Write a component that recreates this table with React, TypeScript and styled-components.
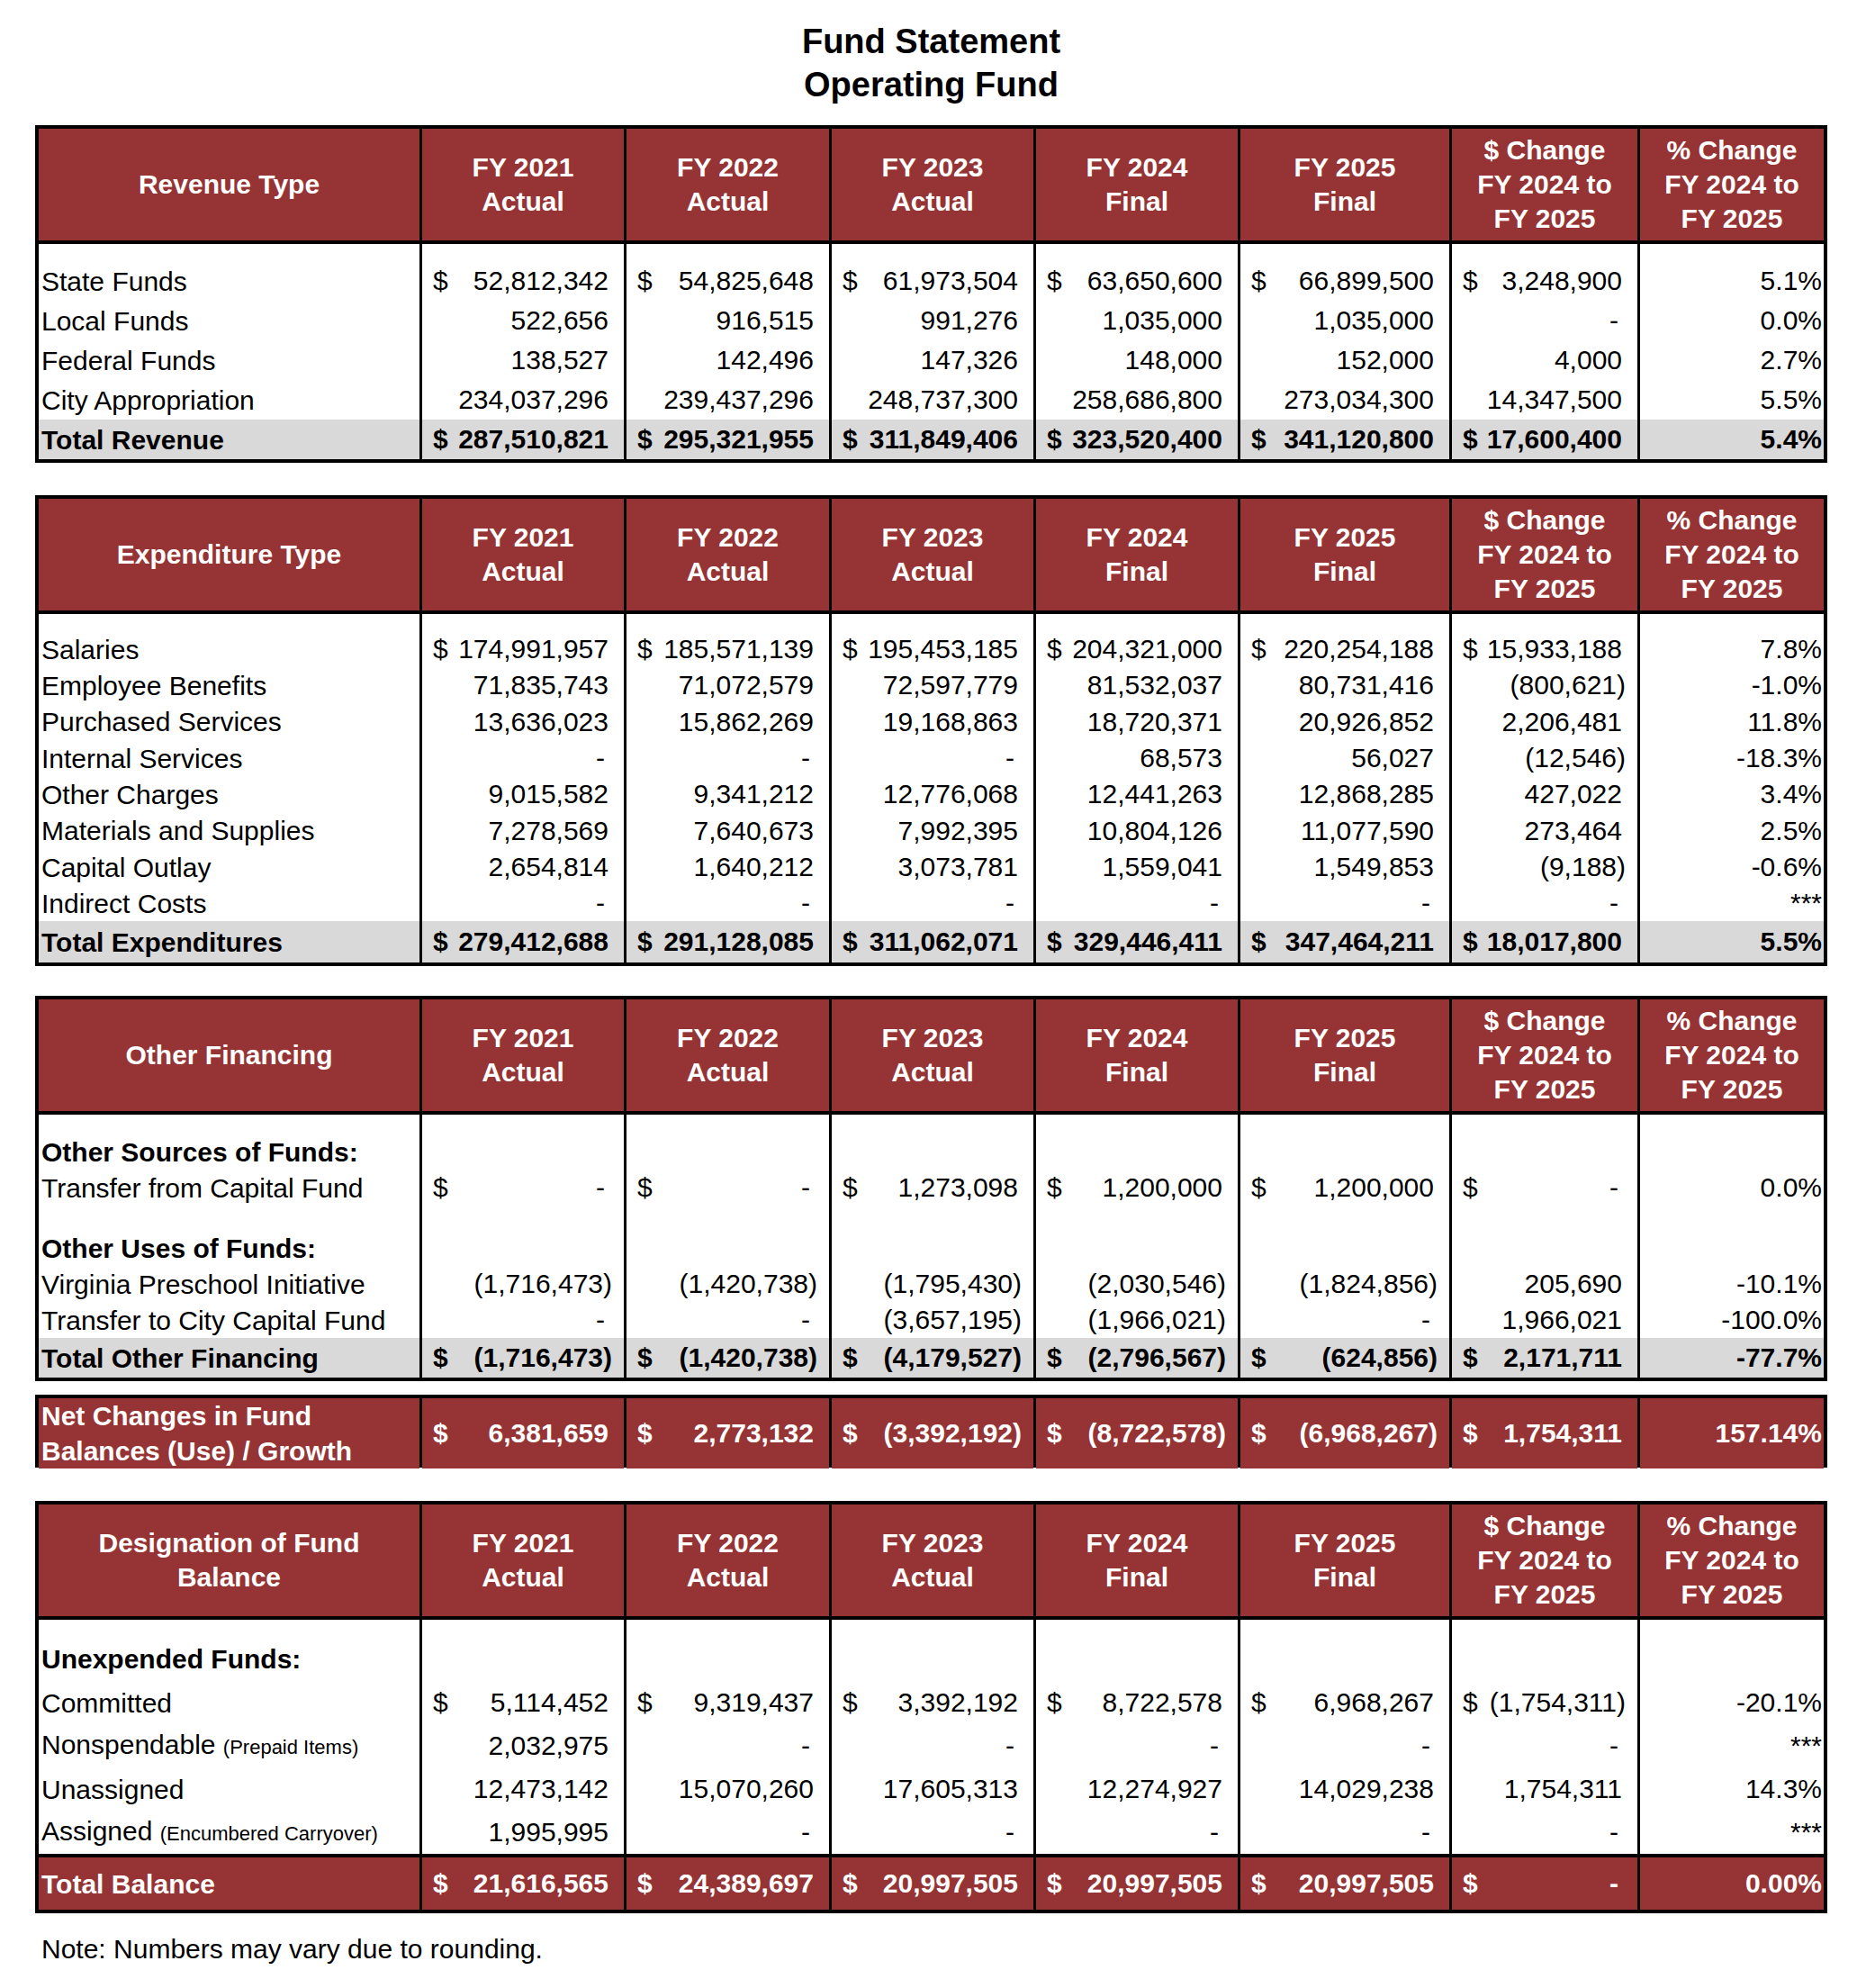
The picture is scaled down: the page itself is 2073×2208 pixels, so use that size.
import React from 'react';
import styled, { createGlobalStyle, css } from 'styled-components';

const GlobalStyle = createGlobalStyle`
  html, body { margin: 0; padding: 0; background: #ffffff; }
  body { font-family: "Liberation Sans", Arial, Helvetica, sans-serif; color: #000; }
  * { box-sizing: content-box; }
`;

const MAROON = '#963335';
const GREY = '#d9d9d9';
const COLS = '423px 224px 225px 224px 224px 232px 206px 204px';

type Tone = 'head' | 'body' | 'total' | 'band';

const toneBg: Record<Tone, string> = {
  head: MAROON,
  body: '#ffffff',
  total: GREY,
  band: MAROON,
};

const Page = styled.main`
  width: 1991px;
  padding: 22px 0 40px 39px;
  display: flex;
  flex-direction: column;
`;

const Title = styled.h1`
  margin: 0 0 21px;
  font-size: 38px;
  line-height: 48px;
  font-weight: 700;
  text-align: center;
`;

const Table = styled.section<{ $mt: number }>`
  margin-top: ${p => p.$mt}px;
  border: 4px solid #000;
  background: #000;
  display: flex;
  flex-direction: column;
`;

const Row = styled.div<{ $h: number; $tone: Tone; $rule?: boolean }>`
  display: grid;
  grid-template-columns: ${COLS};
  column-gap: 3px;
  height: ${p => p.$h}px;
  font-size: 30px;
  font-weight: ${p => (p.$tone === 'body' ? 400 : 700)};
  color: ${p => (p.$tone === 'head' || p.$tone === 'band' ? '#fff' : '#000')};
  ${p => p.$tone === 'head' && css`border-bottom: 4px solid #000;`}
  ${p => p.$rule && css`border-top: 4px solid #000;`}
  & > * {
    background: ${p => toneBg[p.$tone]};
  }
`;

const HeadCell = styled.div`
  display: flex;
  align-items: center;
  justify-content: center;
  text-align: center;
  line-height: 38px;
  white-space: pre-line;
`;

const LabelCell = styled.div<{ $bold?: boolean }>`
  display: flex;
  align-items: center;
  padding-left: 3px;
  line-height: 39px;
  white-space: nowrap;
  font-weight: ${p => (p.$bold ? 700 : 'inherit')};
`;

const Small = styled.span`
  font-size: 22px;
  font-weight: 400;
`;

const MoneyCell = styled.div`
  display: flex;
  align-items: center;
  justify-content: space-between;
  padding: 0 13px 0 12px;
  white-space: nowrap;
`;

const Amount = styled.span<{ $kind: 'num' | 'paren' | 'dash' }>`
  margin-left: auto;
  padding-right: ${p => (p.$kind === 'num' ? 4 : p.$kind === 'dash' ? 8 : 0)}px;
`;

const PctCell = styled.div`
  display: flex;
  align-items: center;
  justify-content: flex-end;
  padding-right: 2px;
  white-space: nowrap;
`;

const EmptyCell = styled.div``;

const Note = styled.p`
  margin: 22px 0 0;
  padding-left: 7px;
  font-size: 30px;
  line-height: 35px;
`;

const HEADS = [
  'FY 2021\nActual',
  'FY 2022\nActual',
  'FY 2023\nActual',
  'FY 2024\nFinal',
  'FY 2025\nFinal',
  '$ Change\nFY 2024 to\nFY 2025',
  '% Change\nFY 2024 to\nFY 2025',
];

type Line =
  | { kind: 'data'; label: React.ReactNode; values: string[]; h: number; tone?: Tone; rule?: boolean }
  | { kind: 'section'; label: string; h: number }
  | { kind: 'spacer'; h: number };

const Money: React.FC<{ value: string }> = ({ value }) => {
  const dollar = value.startsWith('$');
  const v = dollar ? value.slice(1).trim() : value.trim();
  const kind = v === '-' ? 'dash' : v.endsWith(')') ? 'paren' : 'num';
  return (
    <MoneyCell>
      {dollar ? <span>$</span> : null}
      <Amount $kind={kind}>{v}</Amount>
    </MoneyCell>
  );
};

const HeaderRow: React.FC<{ title: string }> = ({ title }) => (
  <Row $h={124} $tone="head">
    <HeadCell>{title}</HeadCell>
    {HEADS.map(h => (
      <HeadCell key={h}>{h}</HeadCell>
    ))}
  </Row>
);

const LineRow: React.FC<{ line: Line }> = ({ line }) => {
  if (line.kind === 'spacer') {
    return (
      <Row $h={line.h} $tone="body">
        {Array.from({ length: 8 }).map((_, i) => (
          <EmptyCell key={i} />
        ))}
      </Row>
    );
  }
  if (line.kind === 'section') {
    return (
      <Row $h={line.h} $tone="body">
        <LabelCell $bold>
          <span>{line.label}</span>
        </LabelCell>
        {Array.from({ length: 7 }).map((_, i) => (
          <EmptyCell key={i} />
        ))}
      </Row>
    );
  }
  const tone = line.tone ?? 'body';
  return (
    <Row $h={line.h} $tone={tone} $rule={line.rule}>
      <LabelCell>
        <span>{line.label}</span>
      </LabelCell>
      {line.values.slice(0, 6).map((v, i) => (
        <Money key={i} value={v} />
      ))}
      <PctCell>{line.values[6]}</PctCell>
    </Row>
  );
};

const FundTable: React.FC<{ title?: string; lines: Line[]; mt: number }> = ({ title, lines, mt }) => (
  <Table $mt={mt}>
    {title ? <HeaderRow title={title} /> : null}
    {lines.map((l, i) => (
      <LineRow key={i} line={l} />
    ))}
  </Table>
);

const revenue: Line[] = [
  { kind: 'spacer', h: 19 },
  { kind: 'data', h: 44, label: 'State Funds', values: ['$52,812,342', '$54,825,648', '$61,973,504', '$63,650,600', '$66,899,500', '$3,248,900', '5.1%'] },
  { kind: 'data', h: 44, label: 'Local Funds', values: ['522,656', '916,515', '991,276', '1,035,000', '1,035,000', '-', '0.0%'] },
  { kind: 'data', h: 44, label: 'Federal Funds', values: ['138,527', '142,496', '147,326', '148,000', '152,000', '4,000', '2.7%'] },
  { kind: 'data', h: 44, label: 'City Appropriation', values: ['234,037,296', '239,437,296', '248,737,300', '258,686,800', '273,034,300', '14,347,500', '5.5%'] },
  { kind: 'data', h: 44, tone: 'total', label: 'Total Revenue', values: ['$287,510,821', '$295,321,955', '$311,849,406', '$323,520,400', '$341,120,800', '$17,600,400', '5.4%'] },
];

const expenditure: Line[] = [
  { kind: 'spacer', h: 19 },
  { kind: 'data', h: 40, label: 'Salaries', values: ['$174,991,957', '$185,571,139', '$195,453,185', '$204,321,000', '$220,254,188', '$15,933,188', '7.8%'] },
  { kind: 'data', h: 40, label: 'Employee Benefits', values: ['71,835,743', '71,072,579', '72,597,779', '81,532,037', '80,731,416', '(800,621)', '-1.0%'] },
  { kind: 'data', h: 41, label: 'Purchased Services', values: ['13,636,023', '15,862,269', '19,168,863', '18,720,371', '20,926,852', '2,206,481', '11.8%'] },
  { kind: 'data', h: 40, label: 'Internal Services', values: ['-', '-', '-', '68,573', '56,027', '(12,546)', '-18.3%'] },
  { kind: 'data', h: 40, label: 'Other Charges', values: ['9,015,582', '9,341,212', '12,776,068', '12,441,263', '12,868,285', '427,022', '3.4%'] },
  { kind: 'data', h: 41, label: 'Materials and Supplies', values: ['7,278,569', '7,640,673', '7,992,395', '10,804,126', '11,077,590', '273,464', '2.5%'] },
  { kind: 'data', h: 40, label: 'Capital Outlay', values: ['2,654,814', '1,640,212', '3,073,781', '1,559,041', '1,549,853', '(9,188)', '-0.6%'] },
  { kind: 'data', h: 40, label: 'Indirect Costs', values: ['-', '-', '-', '-', '-', '-', '***'] },
  { kind: 'data', h: 46, tone: 'total', label: 'Total Expenditures', values: ['$279,412,688', '$291,128,085', '$311,062,071', '$329,446,411', '$347,464,211', '$18,017,800', '5.5%'] },
];

const financing: Line[] = [
  { kind: 'spacer', h: 21 },
  { kind: 'section', h: 40, label: 'Other Sources of Funds:' },
  { kind: 'data', h: 40, label: 'Transfer from Capital Fund', values: ['$ -', '$ -', '$1,273,098', '$1,200,000', '$1,200,000', '$ -', '0.0%'] },
  { kind: 'spacer', h: 27 },
  { kind: 'section', h: 40, label: 'Other Uses of Funds:' },
  { kind: 'data', h: 40, label: 'Virginia Preschool Initiative', values: ['(1,716,473)', '(1,420,738)', '(1,795,430)', '(2,030,546)', '(1,824,856)', '205,690', '-10.1%'] },
  { kind: 'data', h: 40, label: 'Transfer to City Capital Fund', values: ['-', '-', '(3,657,195)', '(1,966,021)', '-', '1,966,021', '-100.0%'] },
  { kind: 'data', h: 44, tone: 'total', label: 'Total Other Financing', values: ['$(1,716,473)', '$(1,420,738)', '$(4,179,527)', '$(2,796,567)', '$(624,856)', '$2,171,711', '-77.7%'] },
];

const netChange: Line[] = [
  {
    kind: 'data',
    h: 73,
    tone: 'band',
    label: (
      <>
        Net Changes in Fund
        <br />
        Balances (Use) / Growth
      </>
    ),
    values: ['$6,381,659', '$2,773,132', '$(3,392,192)', '$(8,722,578)', '$(6,968,267)', '$1,754,311', '157.14%'],
  },
];

const designation: Line[] = [
  { kind: 'spacer', h: 18 },
  { kind: 'section', h: 50, label: 'Unexpended Funds:' },
  { kind: 'data', h: 48, label: 'Committed', values: ['$5,114,452', '$9,319,437', '$3,392,192', '$8,722,578', '$6,968,267', '$(1,754,311)', '-20.1%'] },
  {
    kind: 'data',
    h: 48,
    label: (
      <>
        Nonspendable <Small>(Prepaid Items)</Small>
      </>
    ),
    values: ['2,032,975', '-', '-', '-', '-', '-', '***'],
  },
  { kind: 'data', h: 48, label: 'Unassigned', values: ['12,473,142', '15,070,260', '17,605,313', '12,274,927', '14,029,238', '1,754,311', '14.3%'] },
  {
    kind: 'data',
    h: 48,
    label: (
      <>
        Assigned <Small>(Encumbered Carryover)</Small>
      </>
    ),
    values: ['1,995,995', '-', '-', '-', '-', '-', '***'],
  },
  { kind: 'data', h: 58, tone: 'band', rule: true, label: 'Total Balance', values: ['$21,616,565', '$24,389,697', '$20,997,505', '$20,997,505', '$20,997,505', '$ -', '0.00%'] },
];

export default function App() {
  return (
    <>
      <GlobalStyle />
      <Page>
        <Title>
          Fund Statement
          <br />
          Operating Fund
        </Title>
        <FundTable mt={0} title="Revenue Type" lines={revenue} />
        <FundTable mt={36} title="Expenditure Type" lines={expenditure} />
        <FundTable mt={33} title="Other Financing" lines={financing} />
        <FundTable mt={15} lines={netChange} />
        <FundTable mt={37} title={'Designation of Fund\nBalance'} lines={designation} />
        <Note>Note: Numbers may vary due to rounding.</Note>
      </Page>
    </>
  );
}
